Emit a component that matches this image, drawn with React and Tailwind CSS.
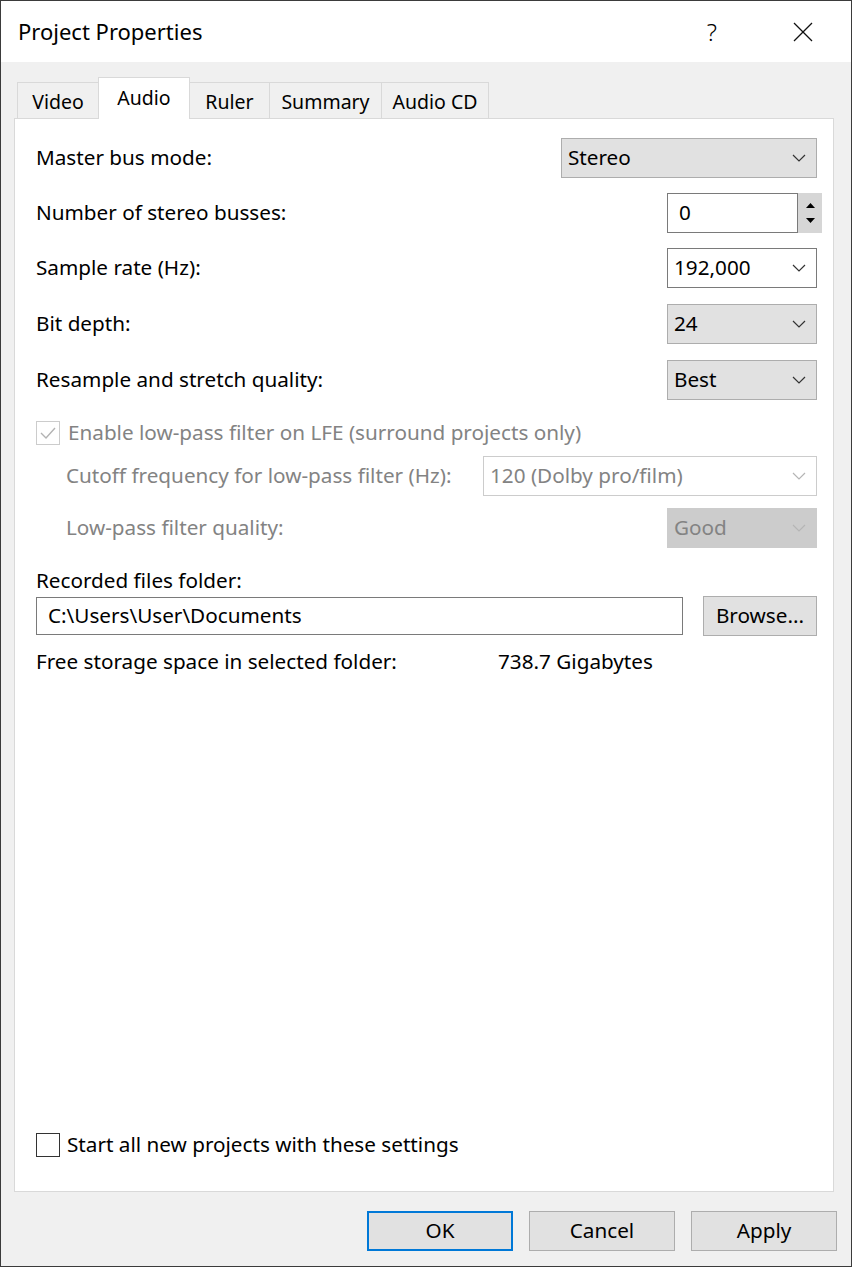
import React from "react";

// Chevron kecil untuk combobox
const Chevron = ({ warna = "#333" }) => (
  <svg width="14" height="8" viewBox="0 0 14 8" fill="none">
    <polyline points="1,1 7,7 13,1" stroke={warna} strokeWidth="1.2" />
  </svg>
);

const Combo = ({ lebar, nilai, varian = "abu" }) => {
  const gaya = {
    abu: "bg-[#e1e1e1] border-[#adadad] text-black",
    putih: "bg-white border-[#7a7a7a] text-black",
    matiPutih: "bg-white border-[#cccccc] text-[#838383]",
    matiAbu: "bg-[#cccccc] border-[#cccccc] text-[#838383]",
  }[varian];
  const warnaPanah = varian.startsWith("mati") ? "#b5b5b5" : "#333";
  return (
    <div className={`${lebar} h-[40px] border flex items-center justify-between pl-[6px] pr-[10px] ${gaya}`}>
      <span>{nilai}</span>
      <Chevron warna={warnaPanah} />
    </div>
  );
};

const Baris = ({ label, children, className = "" }) => (
  <div className={`flex items-center justify-between h-[40px] ${className}`}>
    <span>{label}</span>
    {children}
  </div>
);

const Tab = ({ label, lebar, aktif }) =>
  aktif ? (
    <div className={`${lebar} h-[42px] -mb-px -ml-px bg-white border border-b-0 border-[#d9d9d9] flex justify-center pt-[5px] text-[19.5px] relative z-10`}>
      {label}
    </div>
  ) : (
    <div className={`${lebar} h-[36px] -ml-px bg-[#f0f0f0] border border-b-0 border-[#d9d9d9] flex justify-center pt-[4px] text-[19.5px]`}>
      {label}
    </div>
  );

const Tombol = ({ label, utama }) => (
  <div
    className={`w-[146px] h-[40px] bg-[#e1e1e1] flex items-center justify-center ${
      utama ? "border-2 border-[#0078d7]" : "border border-[#adadad]"
    }`}
  >
    {label}
  </div>
);

export default function App() {
  return (
    <div
      className="w-[852px] h-[1267px] border border-[#3b3b3b] bg-[#f0f0f0] flex flex-col text-[20.7px] text-black"
      style={{ fontFamily: "'Noto Sans', sans-serif" }}
    >
      {/* Title bar */}
      <div className="h-[61px] bg-white flex items-center shrink-0">
        <span className="ml-[17px] text-[22px]">Project Properties</span>
        <span className="ml-auto text-[24px] font-light mr-[76px]">?</span>
        <svg width="20" height="20" viewBox="0 0 20 20" className="mr-[38px]">
          <line x1="1" y1="1" x2="19" y2="19" stroke="#111" strokeWidth="1.3" />
          <line x1="19" y1="1" x2="1" y2="19" stroke="#111" strokeWidth="1.3" />
        </svg>
      </div>

      {/* Tabs */}
      <div className="flex items-end pl-[17px] mt-[14px] h-[42px]">
        <Tab label="Video" lebar="w-[82px]" />
        <Tab label="Audio" lebar="w-[92px]" aktif />
        <Tab label="Ruler" lebar="w-[81px]" />
        <Tab label="Summary" lebar="w-[113px]" />
        <Tab label="Audio CD" lebar="w-[108px]" />
      </div>

      {/* Panel */}
      <div className="ml-[13px] mr-[17px] h-[1074px] bg-white border border-[#d9d9d9] flex flex-col pl-[21px] pr-[16px] pt-[19px] pb-[34px]">
        <Baris label="Master bus mode:">
          <Combo lebar="w-[256px]" nilai="Stereo" />
        </Baris>

        <Baris label="Number of stereo busses:" className="mt-[15px]">
          <div className="flex h-[40px] -mr-[5px]">
            <div className="w-[131px] h-[40px] border border-[#7a7a7a] flex items-center pl-[11px]">0</div>
            <div className="w-[24px] h-[40px] bg-[#d6d6d6] flex flex-col items-center justify-center gap-[10px]">
              <svg width="9" height="5" viewBox="0 0 9 5"><polygon points="4.5,0 9,5 0,5" fill="#000" /></svg>
              <svg width="9" height="5" viewBox="0 0 9 5"><polygon points="0,0 9,0 4.5,5" fill="#000" /></svg>
            </div>
          </div>
        </Baris>

        <Baris label="Sample rate (Hz):" className="mt-[15px]">
          <Combo lebar="w-[150px]" nilai="192,000" varian="putih" />
        </Baris>

        <Baris label="Bit depth:" className="mt-[16px]">
          <Combo lebar="w-[150px]" nilai="24" />
        </Baris>

        <Baris label="Resample and stretch quality:" className="mt-[16px]">
          <Combo lebar="w-[150px]" nilai="Best" />
        </Baris>

        {/* Filter low-pass (nonaktif) */}
        <div className="flex items-center h-[24px] mt-[21px] text-[#838383]">
          <div className="w-[24px] h-[24px] border border-[#cccccc] flex items-center justify-center">
            <svg width="16" height="12" viewBox="0 0 16 12" fill="none">
              <polyline points="1,6 6,11 15,1" stroke="#b3b3b3" strokeWidth="1.4" />
            </svg>
          </div>
          <span className="ml-[8px]">Enable low-pass filter on LFE (surround projects only)</span>
        </div>

        <div className="flex items-center justify-between h-[40px] mt-[11px] pl-[30px] text-[#838383]">
          <span>Cutoff frequency for low-pass filter (Hz):</span>
          <Combo lebar="w-[334px]" nilai="120 (Dolby pro/film)" varian="matiPutih" />
        </div>

        <div className="flex items-center justify-between h-[40px] mt-[12px] pl-[30px] text-[#838383]">
          <span>Low-pass filter quality:</span>
          <Combo lebar="w-[150px]" nilai="Good" varian="matiAbu" />
        </div>

        {/* Folder rekaman */}
        <div className="h-[24px] flex items-center mt-[21px]">Recorded files folder:</div>
        <div className="flex items-center justify-between mt-[3px] h-[40px]">
          <div className="w-[647px] h-[38px] border border-[#7a7a7a] flex items-center pl-[11px]">
            C:\Users\User\Documents
          </div>
          <div className="w-[114px] h-[40px] bg-[#e1e1e1] border border-[#adadad] flex items-center justify-center">
            Browse...
          </div>
        </div>

        <div className="flex items-center h-[24px] mt-[14px]">
          <span className="w-[462px]">Free storage space in selected folder:</span>
          <span>738.7 Gigabytes</span>
        </div>

        <div className="flex items-center h-[24px] mt-auto">
          <div className="w-[24px] h-[24px] border border-[#333]" />
          <span className="ml-[7px]">Start all new projects with these settings</span>
        </div>
      </div>

      {/* Tombol bawah */}
      <div className="flex justify-end gap-[16px] mt-[19px] pr-[14px]">
        <Tombol label="OK" utama />
        <Tombol label="Cancel" />
        <Tombol label="Apply" />
      </div>
    </div>
  );
}
